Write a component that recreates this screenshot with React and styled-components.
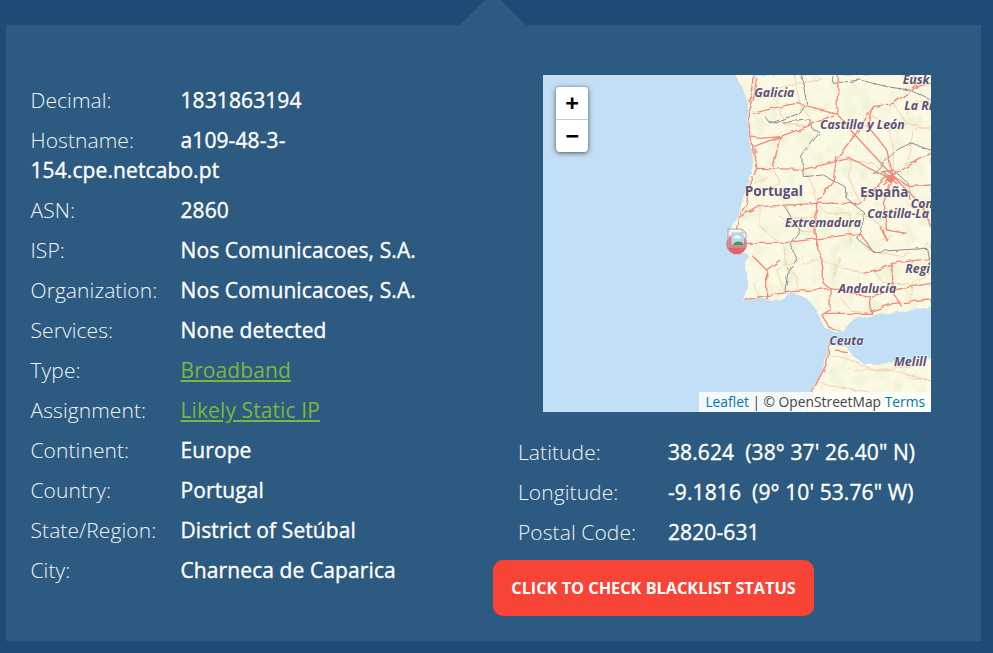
import React from "react";
import styled, { createGlobalStyle } from "styled-components";

const GlobalStyle = createGlobalStyle`
  html, body {
    margin: 0;
    padding: 0;
    background: #1f4a75;
    font-family: "Open Sans", "Liberation Sans", sans-serif;
  }
`;

const leftRows = [
  { label: "Decimal:", value: "1831863194" },
  { label: "Hostname:", value: "a109-48-3-154.cpe.netcabo.pt" },
  { label: "ASN:", value: "2860" },
  { label: "ISP:", value: "Nos Comunicacoes, S.A." },
  { label: "Organization:", value: "Nos Comunicacoes, S.A." },
  { label: "Services:", value: "None detected" },
  { label: "Type:", value: "Broadband", link: true },
  { label: "Assignment:", value: "Likely Static IP", link: true },
  { label: "Continent:", value: "Europe" },
  { label: "Country:", value: "Portugal" },
  { label: "State/Region:", value: "District of Setúbal" },
  { label: "City:", value: "Charneca de Caparica" },
];

const rightRows = [
  { label: "Latitude:", value: "38.624\u00a0 (38° 37' 26.40\" N)" },
  { label: "Longitude:", value: "-9.1816\u00a0 (9° 10' 53.76\" W)" },
  { label: "Postal Code:", value: "2820-631" },
];

// all map drawing coords are 3x page pixels, see the viewBox on MapArt
const majorRoads = [
  "M650 20 640 90 625 130 630 200 645 250 650 295 625 360 620 400 595 440 590 480",
  "M650 295 790 298 930 265 1040 320 1060 320",
  "M895 15 890 130 945 195 890 265 880 330 830 400 825 490 850 600 850 640 870 655",
  "M945 195 1000 110 1060 100 1130 50",
  "M945 195 1060 320 1100 290 1173 250",
  "M1060 320 1030 400 1040 480 1100 490",
  "M1040 320 960 400 830 400 650 410 600 440",
  "M590 520 720 520 840 505 960 490 1000 545",
  "M640 230 720 200 800 170 890 130",
  "M720 200 700 290",
  "M640 130 720 110 770 100 890 130",
  "M870 655 760 665 660 680 615 690",
  "M870 655 990 680 1060 660 1173 640",
  "M870 655 870 720 845 735 870 775 905 785",
  "M1060 660 1055 580 1173 565",
  "M970 610 1060 585",
  "M680 600 680 690",
  "M640 560 680 600 720 570",
  "M990 680 995 730 850 730",
  "M1060 670 1085 710",
  "M1173 690 1060 700 990 725",
  "M870 820 860 880 820 960 800 1026",
  "M885 840 920 845",
  "M640 15 630 100",
  "M1000 110 985 170 1040 240 1060 320",
  "M1060 320 1110 350 1173 345",
  "M1060 320 1140 400 1173 470",
  "M1130 50 1173 40",
  "M1130 50 1120 15",
  "M630 200 660 205 720 200",
  "M1030 480 1040 510 1020 470",
  "M1030 305 1075 345",
  "M1075 305 1030 345",
  "M1052 300 1052 350",
];

const minorRoads = [
  "M760 15 780 100 820 160",
  "M700 290 690 320 640 340",
  "M980 130 1040 160 1060 230 1060 320",
  "M890 265 1000 280 1040 320",
  "M1040 480 1030 510 1060 500",
  "M730 520 740 590 770 620 770 660",
  "M900 560 880 620",
  "M830 400 860 430 930 430 930 520",
  "M1100 400 1173 450",
  "M980 540 1090 560 1173 520",
  "M1100 920 1173 930 1050 900 940 900",
  "M900 950 1000 970 1050 1000",
  "M650 90 700 60 760 40 850 30",
  "M720 110 730 160 800 170",
  "M700 290 720 340 680 360",
  "M790 298 820 350 830 400",
  "M930 265 930 330 960 400",
  "M660 410 660 470 720 520",
  "M740 400 750 450 830 440",
  "M950 430 1000 450 1040 480",
  "M1100 290 1120 180 1173 170",
  "M1060 100 1100 160 1173 180",
  "M780 590 830 570 900 590 970 610",
  "M730 660 710 600 790 560",
  "M1000 600 1030 640 1110 640",
  "M900 680 930 720 990 730",
  "M1110 690 1120 640 1173 610",
  "M850 850 930 870 1000 900 1120 890",
  "M845 940 940 960 980 1026",
  "M640 640 660 690",
  "M1173 110 1130 90 1100 130",
  "M720 440 780 480 830 490",
];

const borders = [
  "M785 15 800 100 780 130 690 160 675 140",
  "M690 160 740 155 810 150 820 180 840 185 800 240 785 260 790 320 850 315 915 350 920 385 975 430 965 470 950 505 1000 545 1160 535 1170 590",
  "M730 405 780 480 750 520 770 570 745 600 735 660 745 670",
  "M1000 310 1070 240 1110 220 1173 240",
  "M1000 310 1060 300 1105 340 1110 390",
  "M880 15 880 40 960 30 1040 50 1110 60 1173 90",
];

// only the part of each label that shows on the tiles, the rest is cut by the tile edge
const mapLabels = [
  { x: 643, y: 82, text: "Galicia" },
  { x: 1088, y: 42, text: "Eusk" },
  { x: 1093, y: 120, text: "La Ri" },
  { x: 840, y: 178, text: "Castilla y León" },
  { x: 614, y: 379, text: "Portugal", big: true },
  { x: 960, y: 382, text: "España", big: true },
  { x: 1112, y: 415, text: "Con" },
  { x: 982, y: 444, text: "Castilla-La" },
  { x: 735, y: 472, text: "Extremadura" },
  { x: 1096, y: 610, text: "Regi" },
  { x: 895, y: 670, text: "Andalucía" },
  { x: 868, y: 825, text: "Ceuta" },
  { x: 1062, y: 887, text: "Melill" },
];

const Page = styled.div`
  height: 653px;
  overflow: hidden;
  padding: 25px 12px 0 6px;
  box-sizing: border-box;
`;

const Panel = styled.section`
  position: relative;
  display: flex;
  height: 616px;
  background: #2d5a80;
  color: #fff;
  font-size: 21px;
  line-height: 30px;

  &::before {
    content: "";
    position: absolute;
    left: 454px;
    top: -25px;
    width: 66px;
    height: 25px;
    background: #2d5a80;
    clip-path: polygon(25px 0, 41px 0, 100% 100%, 0 100%);
  }
`;

const LeftColumn = styled.div`
  box-sizing: border-box;
  width: 487px;
  padding: 60px 50px 0 24.5px;
`;

const RightColumn = styled.div`
  padding-top: 50px;
`;

const InfoRow = styled.div`
  margin-bottom: 10px;
`;

const Label = styled.span`
  display: inline-block;
  width: 150px;
  color: #f1f4f7;
  font-weight: 300;
  letter-spacing: 0.08px;
`;

const Value = styled.span`
  font-weight: 500;
  letter-spacing: 0.1px;
  -webkit-text-stroke: 0.35px #fff;
`;

const ValueLink = styled.a`
  color: #7ab641;
  text-decoration: underline;
  font-weight: 400;
  letter-spacing: 0.1px;
`;

const MapBox = styled.div`
  position: relative;
  width: 388px;
  height: 337px;
  margin-left: 50px;
  overflow: hidden;
  background: #c3dff5;
`;

const MapArt = styled.svg`
  display: block;
  width: 388px;
  height: 337px;
`;

const MapText = styled.text`
  font-family: "Open Sans", sans-serif;
  font-style: ${(p) => (p.$big ? "normal" : "italic")};
  font-weight: 700;
  font-size: ${(p) => (p.$big ? 41 : 37)}px;
  fill: #5f5078;
  stroke: #fdfcf0;
  stroke-width: 3px;
  paint-order: stroke;
`;

const ZoomControl = styled.div`
  position: absolute;
  left: 13px;
  top: 12px;
  width: 32px;
  border-radius: 4px;
  background: #fff;
  box-shadow: 0 1px 5px rgba(0, 0, 0, 0.65);
`;

const ZoomButton = styled.div`
  display: flex;
  align-items: center;
  justify-content: center;
  height: 32px;
  color: #000;
  font-family: "DejaVu Sans Mono", monospace;
  font-size: 22px;
  font-weight: 700;
  line-height: 32px;

  & + & {
    border-top: 1px solid #ccc;
  }
`;

const Attribution = styled.div`
  position: absolute;
  right: 0;
  bottom: 0;
  padding: 0 6px;
  background: rgba(255, 255, 255, 0.8);
  color: #444;
  font-size: 13.8px;
  line-height: 20px;
`;

const AttributionLink = styled.a`
  color: #0078a8;
`;

const CoordList = styled.div`
  margin: 25px 0 0 25px;

  ${InfoRow}:last-child {
    margin-bottom: 0;
  }
`;

const BlacklistButton = styled.button`
  display: block;
  width: 321px;
  height: 56px;
  margin-top: 13px;
  padding: 0;
  border: 0;
  border-radius: 10px;
  background: #f74437;
  color: #fff;
  font-family: "Open Sans", sans-serif;
  font-size: 16.3px;
  font-weight: 700;
  text-transform: uppercase;
`;

const LAND_TOP =
  "M585 15 610 60 625 100 622 150 630 220 640 280 625 340 610 380 600 420 580 460 565 490 590 540 625 550 615 595 625 640 608 692 660 680 700 695 760 670 800 685 830 720 850 770 890 790 910 785 935 750 1000 735 1080 725 1173 710 1173 15Z";
const LAND_SOUTH =
  "M870 820 860 860 840 920 815 970 800 1026 1173 1026 1173 865 1060 870 1040 880 975 885 935 855 920 830Z";

const MapPicture = () => (
  <MapArt viewBox="9 15 1164 1011">
    <defs>
      <filter id="wobble" x="-5%" y="-5%" width="110%" height="110%">
        <feTurbulence type="fractalNoise" baseFrequency="0.035" numOctaves="3" seed="4" result="noise" />
        <feDisplacementMap in="SourceGraphic" in2="noise" scale="14" />
        <feGaussianBlur stdDeviation="1" />
      </filter>
      <filter id="mottle" x="0" y="0" width="100%" height="100%">
        <feTurbulence type="fractalNoise" baseFrequency="0.022" numOctaves="4" seed="9" />
        <feColorMatrix values="0 0 0 0 0.72  0 0 0 0 0.82  0 0 0 0 0.55  2.6 0 0 0 -1.25" />
      </filter>
      <clipPath id="land">
        <path d={LAND_TOP} />
        <path d={LAND_SOUTH} />
      </clipPath>
    </defs>
    <rect x="9" y="15" width="1164" height="1011" fill="#c3dff5" />
    <g filter="url(#wobble)">
      <path d={LAND_TOP} fill="#fbf9e3" />
      <path d={LAND_SOUTH} fill="#fbf9e3" />
    </g>
    <g clipPath="url(#land)" opacity="0.5">
      <rect x="9" y="15" width="1164" height="1011" filter="url(#mottle)" />
    </g>
    <g fill="none" strokeLinejoin="round" filter="url(#wobble)">
      {minorRoads.map((d) => (
        <path key={d} d={d} stroke="#f8c8a8" strokeWidth="2.5" />
      ))}
      {borders.map((d) => (
        <path key={d} d={d} stroke="#8c8b92" strokeWidth="3" />
      ))}
      {majorRoads.map((d) => (
        <path key={d} d={d} stroke="#f2897c" strokeWidth="4" />
      ))}
      <circle cx="1052" cy="325" r="12" fill="#f0857c" />
      <circle cx="645" cy="245" r="8" fill="#f4a99d" />
    </g>
    {mapLabels.map((l) => (
      <MapText key={l.text} x={l.x} y={l.y} $big={l.big}>
        {l.text}
      </MapText>
    ))}
    <circle cx="590" cy="522" r="31" fill="#e8525c" fillOpacity="0.9" />
    <path d="M564 477H606L618 489V531H564Z" fill="#fff" fillOpacity="0.18" stroke="#a9a9ad" strokeWidth="3" />
    <path d="M574 487H603L612 496V525H574Z" fill="#bcd4ee" />
    <path d="M606 477V489H618Z" fill="#e8e8ea" stroke="#a9a9ad" strokeWidth="2" />
    <path d="M580 505C584 495 594 490 604 505Z" fill="#fff" />
    <path d="M578 525C586 511 604 511 612 525Z" fill="#43a047" />
  </MapArt>
);

const App = () => {
  return (
    <Page>
      <GlobalStyle />
      <Panel>
        <LeftColumn>
          {leftRows.map((row) => (
            <InfoRow key={row.label}>
              <Label>{row.label}</Label>
              {row.link ? <ValueLink href="#">{row.value}</ValueLink> : <Value>{row.value}</Value>}
            </InfoRow>
          ))}
        </LeftColumn>
        <RightColumn>
          <MapBox>
            <MapPicture />
            <ZoomControl>
              <ZoomButton>+</ZoomButton>
              <ZoomButton>−</ZoomButton>
            </ZoomControl>
            <Attribution>
              <AttributionLink>Leaflet</AttributionLink> | © OpenStreetMap{" "}
              <AttributionLink>Terms</AttributionLink>
            </Attribution>
          </MapBox>
          <CoordList>
            {rightRows.map((row) => (
              <InfoRow key={row.label}>
                <Label>{row.label}</Label>
                <Value>{row.value}</Value>
              </InfoRow>
            ))}
          </CoordList>
          <BlacklistButton>Click to check blacklist status</BlacklistButton>
        </RightColumn>
      </Panel>
    </Page>
  );
};

export default App;
